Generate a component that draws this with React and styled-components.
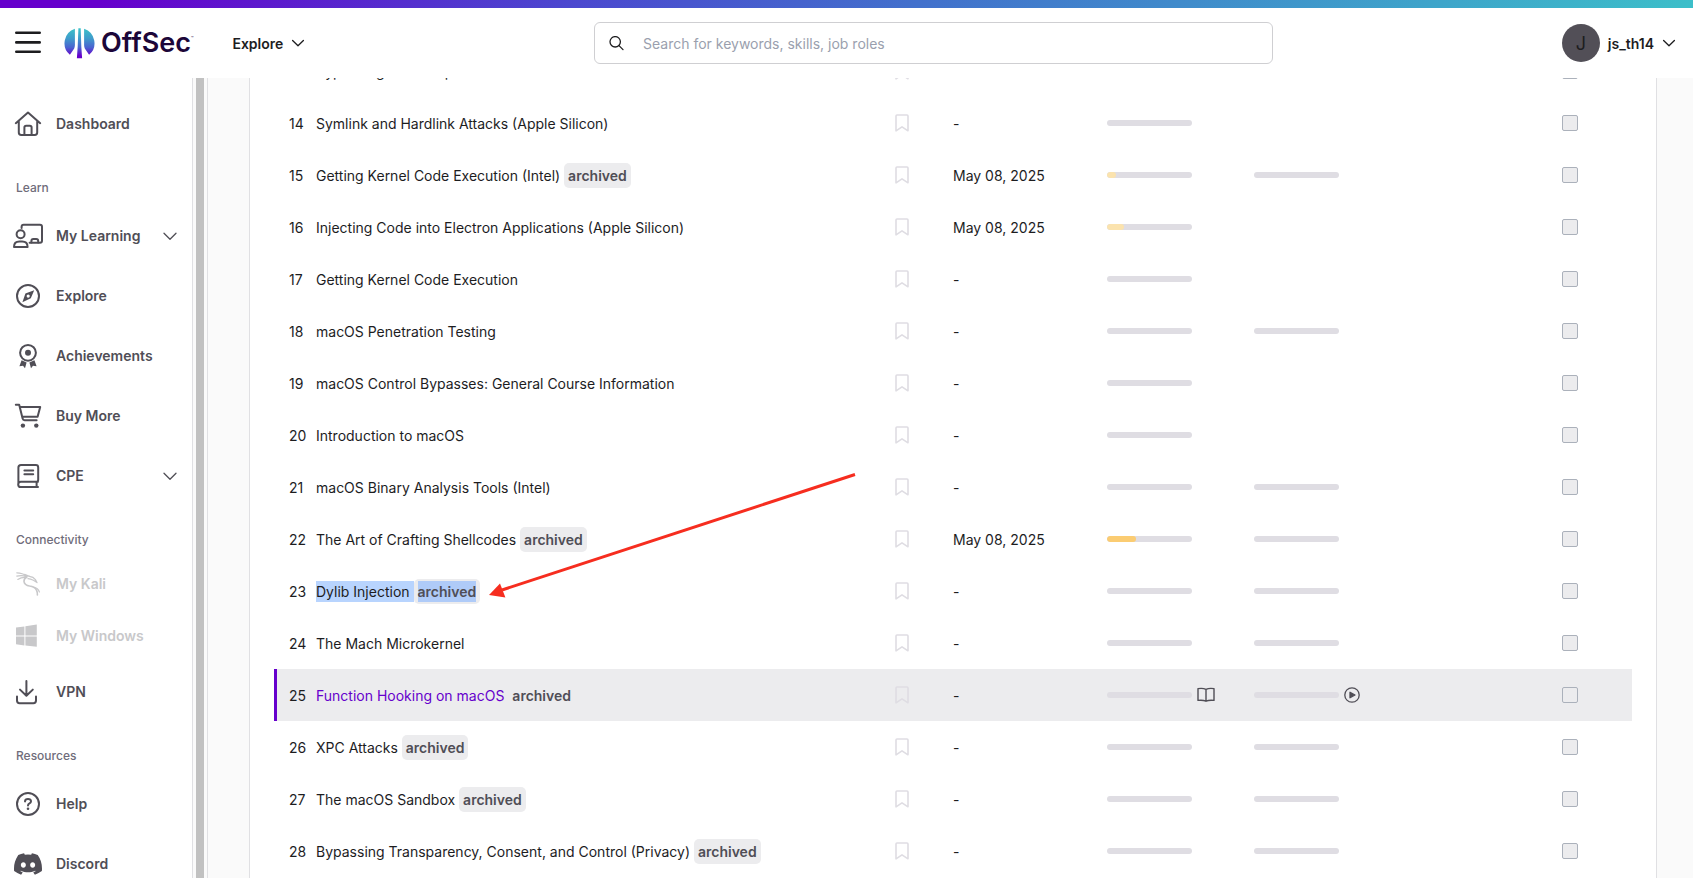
import React from 'react'
import styled, { createGlobalStyle, css } from 'styled-components'
import { BsDiscord } from 'react-icons/bs'

const COLORS = {
  TEXT: '#1d1d1f',
  MENU: '#504e56',
  MUTED: '#6f6c7a',
  DISABLED: '#c8c8ca',
  PURPLE: '#6600cc',
  LOGO: '#1c0639',
  SURFACE: '#ececee',
  BAR: '#dfdde3',
  BORDER: '#e0e0e3',
  PAGE: '#fafafa',
  WHITE: '#ffffff',
}

const GlobalStyle = createGlobalStyle`
  * {
    box-sizing: border-box;
  }
  body {
    margin: 0;
    background: ${COLORS.WHITE};
    color: ${COLORS.TEXT};
    font-family: Inter, 'Liberation Sans', sans-serif;
    font-size: 14px;
    line-height: 21px;
  }
  button, input {
    font: inherit;
    color: inherit;
  }
  svg {
    display: block;
    flex: none;
  }
`

const Page = styled.div`
  position: relative;
  display: flex;
  flex-direction: column;
  height: 100vh;
  overflow: hidden;
`

const TopStripe = styled.div`
  flex: none;
  height: 8px;
  background: linear-gradient(
    135deg,
    #6600cc 6%,
    #4b48cf 34%,
    #4270cc 54%,
    #3cbfc9 100%
  );
`

const Header = styled.header`
  flex: none;
  display: grid;
  grid-template-columns: 594px minmax(0, 1fr) 420px;
  align-items: center;
  height: 70px;
`

const HeaderLeft = styled.div`
  display: flex;
  align-items: center;
  padding-left: 14px;
`

const IconButton = styled.button`
  display: flex;
  align-items: center;
  gap: 8px;
  padding: 0;
  border: 0;
  background: none;
  cursor: pointer;
`

const MenuButton = styled(IconButton)`
  font-weight: 600;
`

const Logo = styled.a`
  display: flex;
  align-items: center;
  gap: 6px;
  margin: 0 39px 0 22px;
  color: ${COLORS.LOGO};
  text-decoration: none;
`

const LogoText = styled.span`
  font-size: 27px;
  font-weight: 600;
  line-height: 30px;
`

const TradeMark = styled.sup`
  font-size: 4px;
  line-height: 0;
  vertical-align: 12px;
`

const SearchBox = styled.label`
  display: flex;
  align-items: center;
  gap: 19px;
  height: 42px;
  padding: 0 14px;
  border: 1px solid #cfcfd2;
  border-radius: 6px;
`

const SearchInput = styled.input`
  flex: 1;
  min-width: 0;
  padding: 0;
  border: 0;
  outline: 0;
  background: none;
  &::placeholder {
    color: #9a9fae;
    opacity: 1;
  }
`

const UserButton = styled(MenuButton)`
  justify-self: end;
  margin-right: 17px;
`

const Avatar = styled.span`
  display: flex;
  align-items: center;
  justify-content: center;
  width: 38px;
  height: 38px;
  border-radius: 50%;
  background: #524f57;
  font-size: 18px;
  font-weight: 400;
`

const Body = styled.div`
  flex: 1;
  display: flex;
  min-height: 0;
`

const Sidebar = styled.nav`
  flex: none;
  width: 193px;
  padding-top: 16px;
  overflow: hidden;
  border-right: 1px solid ${COLORS.BORDER};
`

const ScrollTrack = styled.div`
  flex: none;
  display: flex;
  width: 15px;
  padding: 0 3px;
  border-right: 1px solid ${COLORS.BORDER};
  background: ${COLORS.PAGE};
`

const ScrollThumb = styled.div`
  width: 8px;
  background: #c1c1c1;
`

const SectionTitle = styled.h2`
  height: 52px;
  margin: 0;
  padding: 23px 16px 0;
  color: ${COLORS.MUTED};
  font-size: 12px;
  font-weight: 500;
`

const MenuItem = styled.a`
  display: flex;
  align-items: center;
  height: ${props => (props.$disabled ? 52 : 60)}px;
  padding: 0 15px 1px 12px;
  color: ${props => (props.$disabled ? COLORS.DISABLED : COLORS.MENU)};
  font-weight: 600;
  text-decoration: none;
`

const MenuIcon = styled.span`
  display: flex;
  width: 32px;
  margin-right: 12px;
  justify-content: center;
`

const MenuLabel = styled.span`
  flex: 1;
`

const Main = styled.main`
  flex: 1;
  min-width: 0;
  padding: 0 36px 0 41px;
  overflow: hidden;
  background: ${COLORS.PAGE};
`

const Card = styled.section`
  display: flow-root;
  min-height: 100%;
  padding: 0 24px;
  border: solid ${COLORS.BORDER};
  border-width: 0 1px;
  background: ${COLORS.WHITE};
`

// The list is scrolled part of a row past the header
const ModuleTable = styled.table`
  width: 100%;
  margin-top: -33px;
  table-layout: fixed;
  border-collapse: separate;
  border-spacing: 0;
`

const Col = styled.col`
  width: ${props => props.$width}px;
`

const Cell = styled.td`
  height: 52px;
  padding: 0;
  vertical-align: middle;
  white-space: nowrap;
`

const NumberCell = styled(Cell)`
  padding-left: 12px;
  border-left: 3px solid transparent;
`

const Row = styled.tr`
  ${props =>
    props.$active &&
    css`
      background: ${COLORS.SURFACE};
      ${NumberCell} {
        border-color: ${COLORS.PURPLE};
      }
    `}
`

const TitleLine = styled.div`
  display: flex;
  align-items: center;
`

const ModuleLink = styled.a`
  color: ${props => (props.$active ? COLORS.PURPLE : 'inherit')};
  background: ${props => (props.$selected ? '#b8d4fe' : 'none')};
  text-decoration: none;
  white-space: pre;
`

const Badge = styled.span`
  padding: 2px 4px;
  border-radius: 5px;
  background: ${COLORS.SURFACE};
  color: ${COLORS.MENU};
  font-weight: 600;
`

const BadgeText = styled.span`
  display: block;
  background: ${props => (props.$selected ? '#afcbf8' : 'none')};
`

const BookmarkButton = styled(IconButton)`
  color: ${COLORS.BAR};
`

const BarLine = styled.div`
  display: flex;
  align-items: center;
  gap: 5px;
  color: ${COLORS.MENU};
`

const Bar = styled.div`
  width: 85px;
  height: 6px;
  overflow: hidden;
  border-radius: 3px;
  background: ${COLORS.BAR};
`

const BarFill = styled.div`
  height: 6px;
  border-radius: 3px;
  background: ${props => (props.$strong ? '#fbcc72' : '#fbe3ae')};
`

const Check = styled.input`
  display: block;
  appearance: none;
  width: 16px;
  height: 16px;
  margin: 0;
  border: 1px solid #abb1bb;
  border-radius: 2px;
  background: ${COLORS.SURFACE};
`

const Arrow = styled.svg`
  position: absolute;
  top: 470px;
  left: 486px;
  pointer-events: none;
`

const Icon = ({ width = 28, height = 28, stroke = 2, children }) => (
  <svg
    width={width}
    height={height}
    viewBox={`0 0 ${width} ${height}`}
    fill="none"
    stroke="currentColor"
    strokeWidth={stroke}
    strokeLinecap="round"
    strokeLinejoin="round"
    aria-hidden="true"
  >
    {children}
  </svg>
)

const Chevron = ({ size = 14 }) => (
  <Icon width={14} height={14} stroke={1.3}>
    <path d={size === 12 ? 'M1.6 4.5 7 9.8l5.4-5.3' : 'M1 4.2 7 10.3l6-6.1'} />
  </Icon>
)

const BurgerIcon = () => (
  <Icon stroke={2.6}>
    <path d="M2.3 3.8h23.4M2.3 13.4h23.4M2.3 22.8h23.4" />
  </Icon>
)

const LogoMark = () => (
  <svg width="31" height="31" viewBox="0 0 31 31" aria-hidden="true">
    <defs>
      <linearGradient
        id="mark"
        gradientUnits="userSpaceOnUse"
        x1="0"
        y1="0"
        x2="0"
        y2="30"
      >
        <stop offset="0" stopColor="#3cc3c8" />
        <stop offset="0.35" stopColor="#3f9bcb" />
        <stop offset="0.65" stopColor="#4a62d0" />
        <stop offset="0.92" stopColor="#6600cc" />
      </linearGradient>
    </defs>
    <g fill="url(#mark)">
      <path d="M10.9.8A15.2 15.2 0 0 0 5.9 26.8L10.2 20.4Q10.9 19 10.9 17Z" />
      <path d="M20.1.8A15.2 15.2 0 0 1 25.1 26.8L20.8 20.4Q20.1 19 20.1 17Z" />
      <path d="M14.4.2h2.3l.6 18 .8 12h-5.2l.8-12Z" />
    </g>
  </svg>
)

const SearchIcon = () => (
  <Icon width={15} height={15} stroke={1.3}>
    <circle cx="6.2" cy="5.8" r="5.2" />
    <path d="m10 9.6 4 4" />
  </Icon>
)

const HouseIcon = () => (
  <Icon>
    <path d="M1.8 13.2 14 2.6l12.2 10.6M4.8 11v11.6q0 2.4 2.4 2.4h13.6q2.4 0 2.4-2.4V11M10.4 24.6v-7q0-1.8 1.8-1.8h3.6q1.8 0 1.8 1.8v7" />
  </Icon>
)

const TeacherIcon = () => (
  <Icon width={32}>
    <path d="M9.6 6V4.8q0-2 2-2H28q2 0 2 2v14q0 2-2 2H17.6" />
    <circle cx="8.6" cy="12.2" r="4" />
    <path d="M2 25q0-5.4 5.4-5.4h2.8q5.4 0 5.4 5.4Z" />
    <path d="M19.4 20.4V19q0-2 2-2h2.8q2 0 2 2v1.4" />
  </Icon>
)

const CompassIcon = () => (
  <Icon>
    <circle cx="14" cy="14" r="11" />
    <path
      fillRule="evenodd"
      fill="currentColor"
      stroke="none"
      d="M20.2 8.2 16.8 16.2 8.4 20.2 11.4 11.6Zm-6 4.3a1.6 1.6 0 1 0 0 3.2 1.6 1.6 0 0 0 0-3.2Z"
    />
  </Icon>
)

const MedalIcon = () => (
  <Icon>
    <circle cx="14" cy="10.8" r="7.9" />
    <circle cx="14" cy="10.8" r="3" fill="currentColor" stroke="none" />
    <path
      fill="currentColor"
      stroke="none"
      d="m7.6 18.2 5 2.4-1.6 5.6-2-2.4-3.6.4ZM20.4 18.2l-5 2.4 1.6 5.6 2-2.4 3.6.4Z"
    />
  </Icon>
)

const CartIcon = () => (
  <Icon>
    <path d="M1.8 2.8h3.4L8.6 16.6q.4 1.6 2 1.6h12M6 5h20.2l-2.6 9.8H8.4" />
    <circle cx="8.9" cy="23.6" r="2.2" fill="currentColor" stroke="none" />
    <circle cx="22.3" cy="23.6" r="2.2" fill="currentColor" stroke="none" />
  </Icon>
)

const BookIcon = () => (
  <Icon>
    <path d="M24 19.8H6.8a2.6 2.6 0 0 0 0 5.2H24M4.4 22V5.6q0-2.6 2.6-2.6h14.8q2.4 0 2.4 2.4v12q0 2.4-1.6 2.4V25M10.4 8.4h8.8M10.4 12.2h8.8" />
  </Icon>
)

const KaliIcon = () => (
  <Icon width={24} height={24} stroke={1.2}>
    <path d="M.8.8Q6.5.8 11 4.2M.8 4.2Q6 2.8 11 4.8M1.8 7.4Q5.6 4.8 10.6 5.4M8.6 2.4 13.4 4.4" />
    <path strokeWidth="1.6" d="M10.6 5.2Q7.8 6.6 8 9.6q.6 3.6 5.6 4.4 5 .4 7 4.4 1 2.2.8 4.6" />
    <path d="M13.4 4.4q4 .4 6 3.2l1.6 3-3.6-2.4q-3-1.4-5.4-1.6M17.6 15.2q4.4.8 5.8 4.8" />
  </Icon>
)

const WindowsIcon = () => (
  <Icon>
    <path
      fill="currentColor"
      stroke="none"
      d="m2 5.6 8.4-1.2v9H2ZM11.4 4.2 22.8 2.6v10.8H11.4ZM2 14.4h8.4v9L2 22.2ZM11.4 14.4h11.4v10.4l-11.4-1.4Z"
    />
  </Icon>
)

const DownloadIcon = () => (
  <Icon>
    <path d="M12.4 3v14.4M6 11.6l6.4 6.2 6.4-6.2M3 18.4v4.2q0 2.6 2.6 2.6h13.8q2.6 0 2.6-2.6v-4.2" />
  </Icon>
)

const HelpIcon = () => (
  <Icon>
    <circle cx="14" cy="14" r="11" />
    <path d="M11 11.4q.2-2.4 3-2.4t3 2.2q0 1.4-1.5 2.2T14 15.4" />
    <circle cx="14" cy="18.8" r="1.3" fill="currentColor" stroke="none" />
  </Icon>
)

const BookmarkIcon = () => (
  <Icon width={14} height={18} stroke={1.6}>
    <path d="M1 16.8V2q0-1 1-1h10q1 0 1 1v14.8l-6-4Z" />
  </Icon>
)

const OpenBookIcon = () => (
  <Icon width={18} height={16} stroke={1.4}>
    <path d="M9 2.4Q6 .8 1 1.6v11.8q5-.6 8 .8 3-1.4 8-.8V1.6q-5-.8-8 .8ZM9 2.4v11.8" />
  </Icon>
)

const PlayIcon = () => (
  <Icon width={16} height={16} stroke={1.3}>
    <circle cx="8" cy="8" r="7.2" />
    <path d="M6 5.2v5.6L11 8Z" fill="currentColor" />
  </Icon>
)

const MENU = [
  { label: 'Dashboard', icon: <HouseIcon /> },
  { title: 'Learn' },
  { label: 'My Learning', icon: <TeacherIcon />, expandable: true },
  { label: 'Explore', icon: <CompassIcon /> },
  { label: 'Achievements', icon: <MedalIcon /> },
  { label: 'Buy More', icon: <CartIcon /> },
  { label: 'CPE', icon: <BookIcon />, expandable: true },
  { title: 'Connectivity' },
  { label: 'My Kali', icon: <KaliIcon />, disabled: true },
  { label: 'My Windows', icon: <WindowsIcon />, disabled: true },
  { label: 'VPN', icon: <DownloadIcon /> },
  { title: 'Resources' },
  { label: 'Help', icon: <HelpIcon /> },
  { label: 'Discord', icon: <BsDiscord size={28} /> },
]

const MODULES = [
  { id: 13, title: 'Bypassing GateKeeper' },
  { id: 14, title: 'Symlink and Hardlink Attacks (Apple Silicon)' },
  {
    id: 15,
    title: 'Getting Kernel Code Execution (Intel)',
    archived: true,
    date: 'May 08, 2025',
    progress: 10,
    video: true,
  },
  {
    id: 16,
    title: 'Injecting Code into Electron Applications (Apple Silicon)',
    date: 'May 08, 2025',
    progress: 20,
  },
  { id: 17, title: 'Getting Kernel Code Execution' },
  { id: 18, title: 'macOS Penetration Testing', video: true },
  { id: 19, title: 'macOS Control Bypasses: General Course Information' },
  { id: 20, title: 'Introduction to macOS' },
  { id: 21, title: 'macOS Binary Analysis Tools (Intel)', video: true },
  {
    id: 22,
    title: 'The Art of Crafting Shellcodes',
    archived: true,
    date: 'May 08, 2025',
    progress: 34,
    video: true,
  },
  {
    id: 23,
    title: 'Dylib Injection',
    archived: true,
    selected: true,
    video: true,
  },
  { id: 24, title: 'The Mach Microkernel', video: true },
  {
    id: 25,
    title: 'Function Hooking on macOS',
    archived: true,
    active: true,
    video: true,
  },
  { id: 26, title: 'XPC Attacks', archived: true, video: true },
  { id: 27, title: 'The macOS Sandbox', archived: true, video: true },
  {
    id: 28,
    title: 'Bypassing Transparency, Consent, and Control (Privacy)',
    archived: true,
    video: true,
  },
]

const ProgressBar = ({ value = 0, label, icon }) => (
  <BarLine>
    <Bar role="progressbar" aria-valuenow={value} aria-label={label}>
      <BarFill $strong={value > 25} style={{ width: `${value}%` }} />
    </Bar>
    {icon}
  </BarLine>
)

const ModuleRow = ({ module }) => {
  const { id, title, archived, date, progress, video, active, selected } =
    module
  return (
    <Row $active={active}>
      <NumberCell>{id}</NumberCell>
      <Cell>
        <TitleLine>
          <ModuleLink href="#" $active={active} $selected={selected}>
            {archived ? `${title} ` : title}
          </ModuleLink>
          {archived && (
            <Badge>
              <BadgeText $selected={selected}>archived</BadgeText>
            </Badge>
          )}
        </TitleLine>
      </Cell>
      <Cell>
        <BookmarkButton aria-label={`Bookmark ${title}`}>
          <BookmarkIcon />
        </BookmarkButton>
      </Cell>
      <Cell>{date || '-'}</Cell>
      <Cell>
        <ProgressBar
          value={progress}
          label="Reading progress"
          icon={active && <OpenBookIcon />}
        />
      </Cell>
      <Cell>
        {video && (
          <ProgressBar label="Video progress" icon={active && <PlayIcon />} />
        )}
      </Cell>
      <Cell />
      <Cell>
        <Check type="checkbox" aria-label={`Complete ${title}`} />
      </Cell>
    </Row>
  )
}

const App = () => (
  <>
    <GlobalStyle />
    <Page>
      <TopStripe />
      <Header>
        <HeaderLeft>
          <IconButton aria-label="Menu">
            <BurgerIcon />
          </IconButton>
          <Logo href="#">
            <LogoMark />
            <LogoText>
              OffSec<TradeMark>™</TradeMark>
            </LogoText>
          </Logo>
          <MenuButton>
            Explore
            <Chevron size={12} />
          </MenuButton>
        </HeaderLeft>
        <SearchBox>
          <SearchIcon />
          <SearchInput
            type="text"
            aria-label="Search"
            placeholder="Search for keywords, skills, job roles"
          />
        </SearchBox>
        <UserButton>
          <Avatar>J</Avatar>
          js_th14
          <Chevron size={12} />
        </UserButton>
      </Header>
      <Body>
        <Sidebar>
          {MENU.map(({ title, label, icon, expandable, disabled }) =>
            title ? (
              <SectionTitle key={title}>{title}</SectionTitle>
            ) : (
              <MenuItem key={label} href="#" $disabled={disabled}>
                <MenuIcon>{icon}</MenuIcon>
                <MenuLabel>{label}</MenuLabel>
                {expandable && <Chevron />}
              </MenuItem>
            )
          )}
        </Sidebar>
        <ScrollTrack>
          <ScrollThumb />
        </ScrollTrack>
        <Main>
          <Card>
            <ModuleTable>
              <colgroup>
                <Col $width={42} />
                <col />
                <Col $width={58} />
                <Col $width={154} />
                <Col $width={147} />
                <Col $width={147} />
                <Col $width={161} />
                <Col $width={70} />
              </colgroup>
              <tbody>
                {MODULES.map(module => (
                  <ModuleRow key={module.id} module={module} />
                ))}
              </tbody>
            </ModuleTable>
          </Card>
        </Main>
      </Body>
      <Arrow width="372" height="132" viewBox="0 0 372 132" aria-hidden="true">
        <path d="M369 4.5 16 120" stroke="#f62d1f" strokeWidth="3" />
        <path d="M3 125 14 113.5 19.4 127.4Z" fill="#f62d1f" />
      </Arrow>
    </Page>
  </>
)

export default App
